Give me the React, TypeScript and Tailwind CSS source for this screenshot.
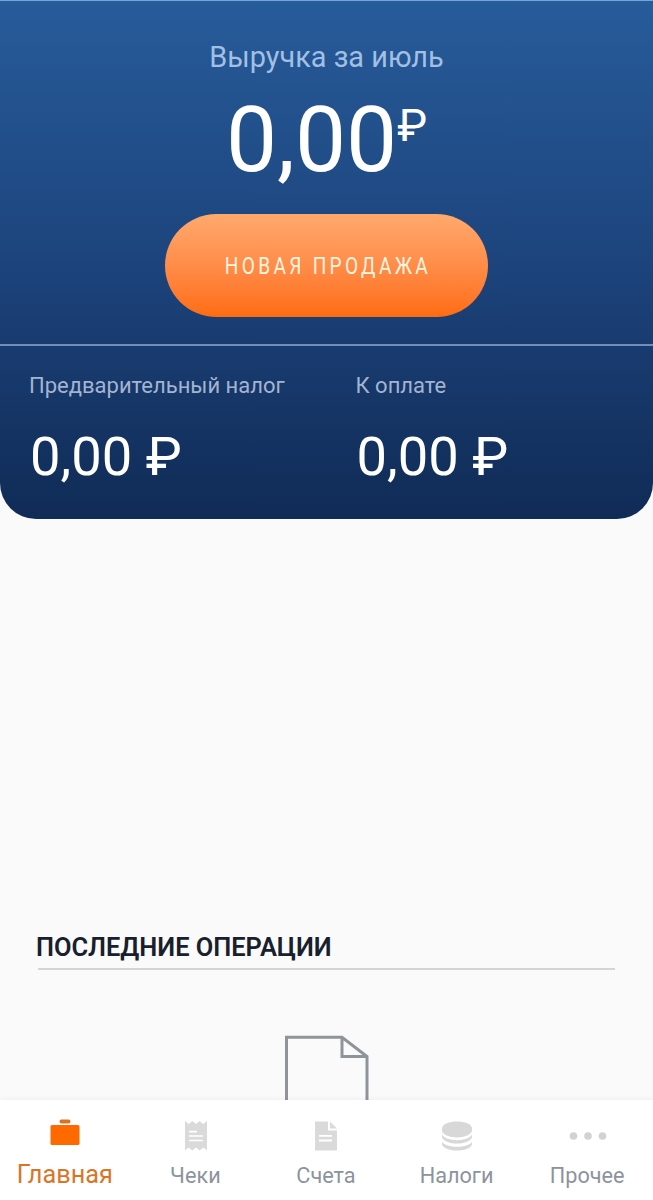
import type { ReactNode } from "react";

function TabItem({ label, active = false, children }: { label: string; active?: boolean; children: ReactNode }) {
  return (
    <a className="flex min-w-0 flex-col items-center pt-4">
      <span className="flex h-10 items-center justify-center">{children}</span>
      <span
        className={
          active
            ? "mt-[3px] whitespace-nowrap pr-px text-[25.3px] leading-8 text-[#dc7426]"
            : "mt-1 whitespace-nowrap pr-px text-[21.7px] leading-8 text-[#8d939c]"
        }
      >
        {label}
      </span>
    </a>
  );
}

function Amount({ label, value }: { label: string; value: string }) {
  return (
    <div className="flex-1 pl-[29px]">
      <div className="mt-[26px] whitespace-nowrap text-[22px] leading-7 text-[#a3b4d1]">{label}</div>
      <div className="mt-[27px] whitespace-nowrap pl-px text-[54.3px] leading-[60px] text-white">{value}</div>
    </div>
  );
}

export default function App() {
  return (
    <div className="flex h-[1200px] w-[653px] flex-col overflow-hidden bg-[#fafafa] font-[Roboto,sans-serif]">
      <section className="flex h-[519px] shrink-0 flex-col rounded-b-[36px] border-t border-[#79a3d6] bg-linear-to-b from-[#275c9a] via-[#1d447d] to-[#102b56]">
        <div className="flex h-[343px] flex-col items-center">
          <h1 className="mt-9 text-[28.9px] leading-10 text-[#a2bfe4]">Выручка за июль</h1>
          <div className="mt-[18px] flex h-[90px] items-start text-white">
            <span className="text-[91px] leading-[90px]">0,00</span>
            <span className="mt-[5px] text-[45px] leading-[52px]">₽</span>
          </div>
          <button className="mt-[28.5px] flex h-[103.5px] w-[323px] items-center justify-center rounded-full bg-linear-to-b from-[#ffa96d] to-[#ff6c0c]">
            <span className="mt-px ml-[3px] scale-x-[0.77] whitespace-nowrap text-[24.8px] leading-8 tracking-[4.3px] text-[#fff6e0]">
              НОВАЯ ПРОДАЖА
            </span>
          </button>
        </div>
        <div className="flex flex-1 border-t-2 border-[#758eb9]">
          <Amount label="Предварительный налог" value="0,00 ₽" />
          <Amount label="К оплате" value="0,00 ₽" />
        </div>
      </section>

      <main className="flex flex-1 flex-col overflow-hidden pt-[412px] pr-[38px] pl-[38px]">
        <h2 className="-ml-0.5 text-[25.4px] leading-8 font-semibold text-[#17202c]">ПОСЛЕДНИЕ ОПЕРАЦИИ</h2>
        <div className="mt-[5px] h-0.5 shrink-0 bg-[#d4d5d7]" />
        <svg className="mt-[65px] shrink-0 self-center" width="84" height="110" viewBox="0 0 84 110" fill="none" stroke="#8f949b" strokeWidth="3">
          <path d="M1.5 110V2.2H57L82 21.5V110M57 2.2V21.5H82" />
        </svg>
      </main>

      <nav className="grid h-[100px] shrink-0 grid-cols-5 bg-white shadow-[0_-1px_5px_rgba(0,0,0,0.05)]">
        <TabItem label="Главная" active>
          <svg width="30" height="40" viewBox="0 0 30 40">
            <rect x="9.5" y="3.5" width="11" height="4" rx="2" fill="#d9731f" />
            <rect x="0.5" y="9" width="29" height="20" rx="1.5" fill="#ff6a00" />
          </svg>
        </TabItem>
        <TabItem label="Чеки">
          <svg width="24" height="40" viewBox="0 0 24 40">
            <path d="M1 5L4.7 8L8.3 5L12 8L15.7 5L19.3 8L23 5V34.5L19.3 31.5L15.7 34.5L12 31.5L8.3 34.5L4.7 31.5L1 34.5Z" fill="#dadada" />
            <path d="M5 15.7H13M5 20H19M5 24.5H19" stroke="#fff" strokeWidth="1.7" />
          </svg>
        </TabItem>
        <TabItem label="Счета">
          <svg width="24" height="40" viewBox="0 0 24 40">
            <path d="M1 5.5H14V14.5H23V34.5H1Z" fill="#dadada" />
            <path d="M16 5.5L23 12.5H16Z" fill="#dadada" />
            <path d="M5 19.8H18M5 24.5H18" stroke="#fff" strokeWidth="1.8" />
          </svg>
        </TabItem>
        <TabItem label="Налоги">
          <svg width="30" height="40" viewBox="0 0 30 40" fill="#d8d8d8">
            <path d="M0 12.5C0 3 30 3 30 12.5V15C27 23.5 3 23.5 0 15Z" />
            <path d="M0 18.5C4 26 26 26 30 18.5V21.5C26 29.5 4 29.5 0 21.5Z" />
            <path d="M0 25.8C4 32.5 26 32.5 30 25.8V28.5C27 36.5 3 36.5 0 28.5Z" />
          </svg>
        </TabItem>
        <TabItem label="Прочее">
          <svg width="38" height="40" viewBox="0 0 38 40" fill="#d2d2d2">
            <circle cx="4.5" cy="20" r="3.8" />
            <circle cx="19" cy="20" r="3.8" />
            <circle cx="33.5" cy="20" r="3.8" />
          </svg>
        </TabItem>
      </nav>
    </div>
  );
}
